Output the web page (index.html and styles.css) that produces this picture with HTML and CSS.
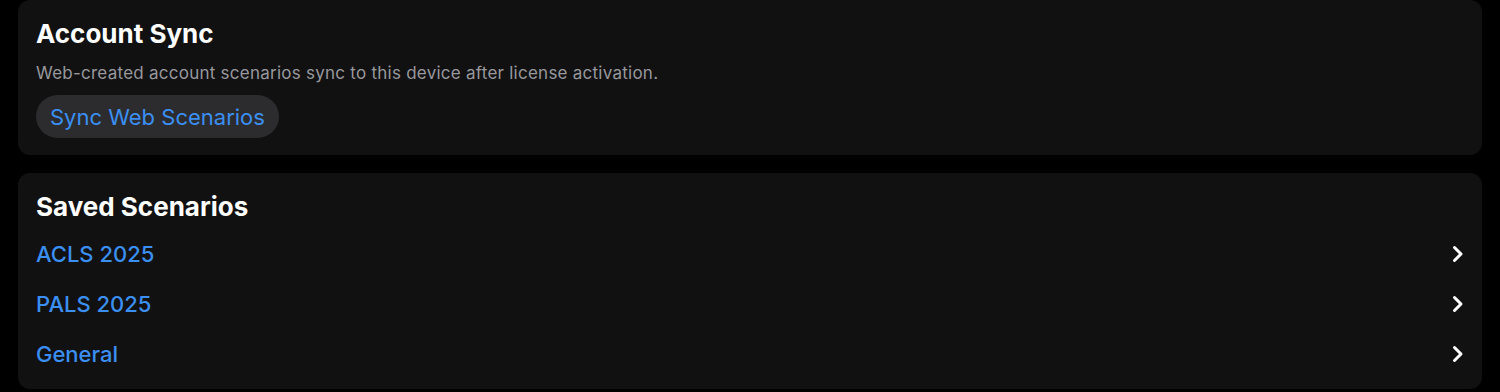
FILE: index.html
```html
<!DOCTYPE html>
<html lang="en">
<head>
  <meta charset="UTF-8" />
  <meta name="viewport" content="width=device-width, initial-scale=1" />
  <title>Scenarios</title>
  <link rel="stylesheet" href="styles.css">
</head>
<body>

  <div class="container">

    <!-- Account Sync -->
    <div class="card sync-card">
      <h2>Account Sync</h2>
      <p class="note">Web-created account scenarios sync to this device after license activation.</p>
      <button class="pill-button">Sync Web Scenarios</button>
    </div>

    <!-- Saved Scenarios -->
    <div class="card list-card">
      <h2>Saved Scenarios</h2>
      <div class="row">
        <span class="row-title">ACLS 2025</span>
        <svg class="chevron" viewBox="0 0 12 18"><path d="M2.5 2.5 L9 9 L2.5 15.5" /></svg>
      </div>
      <div class="row">
        <span class="row-title">PALS 2025</span>
        <svg class="chevron" viewBox="0 0 12 18"><path d="M2.5 2.5 L9 9 L2.5 15.5" /></svg>
      </div>
      <div class="row">
        <span class="row-title">General</span>
        <svg class="chevron" viewBox="0 0 12 18"><path d="M2.5 2.5 L9 9 L2.5 15.5" /></svg>
      </div>
    </div>

  </div>

</body>
</html>
```

FILE: styles.css
```css
body {
  font-family: Inter, "Liberation Sans", sans-serif;
  background: #000;
  margin: 0;
  padding: 0;
  color: #fff;
}

.container {
  display: flex;
  flex-direction: column;
  gap: 18px;
  padding: 0 18px;
}

.card {
  background-color: #111111;
  border-radius: 12px;
  padding: 18px 18px 17px;
}

h2 {
  margin: 0;
  font-size: 26px;
  line-height: 32px;
  font-weight: 700;
  color: #fff;
}

.note {
  margin: 13px 0 12px;
  font-size: 17px;
  line-height: 20px;
  letter-spacing: 0.25px;
  color: #98989d;
}

.pill-button {
  display: block;
  height: 43px;
  padding: 0 14px;
  font-family: inherit;
  font-size: 22px;
  color: #3b8ff2;
  background-color: #2c2c2e;
  border: none;
  border-radius: 22px;
  cursor: pointer;
}

.list-card {
  padding-bottom: 10px;
}

.list-card h2 {
  margin-bottom: 6px;
}

.row {
  display: flex;
  align-items: center;
  justify-content: space-between;
  height: 50px;
  cursor: pointer;
}

.row-title {
  font-size: 22px;
  font-weight: 500;
  color: #3b8ff2;
}

.chevron {
  width: 12px;
  height: 18px;
  margin-right: 0;
  fill: none;
  stroke: #fff;
  stroke-width: 3;
  stroke-linecap: round;
  stroke-linejoin: round;
}
```
